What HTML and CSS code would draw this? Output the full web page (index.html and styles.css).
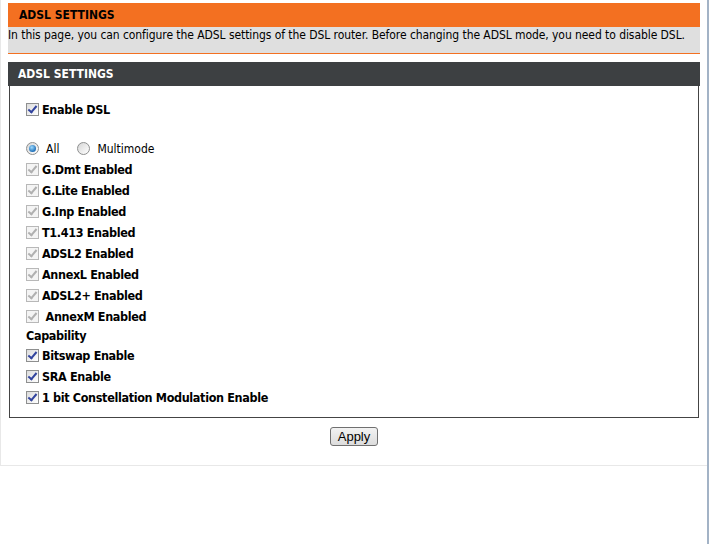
FILE: index.html
```html
<!DOCTYPE html>
<html lang="en">
<head>
    <meta charset="UTF-8">
    <title>ADSL Settings</title>
    <link rel="stylesheet" href="styles.css">
</head>
<body>

<div class="frame">
    <div class="page">
        <!-- Page title and help text -->
        <div class="title-bar">ADSL SETTINGS</div>
        <div class="help-text">In this page, you can configure the ADSL settings of the DSL router. Before changing the ADSL mode, you need to disable DSL.</div>

        <!-- Settings box -->
        <form id="adslForm">
            <div class="box-header">ADSL SETTINGS</div>
            <div class="box">
                <label class="row"><input type="checkbox" name="enableDsl" checked> Enable DSL</label>

                <div class="row radio-row">
                    <label><input type="radio" name="mode" value="all" checked> All</label>
                    <label><input type="radio" name="mode" value="multimode"> Multimode</label>
                </div>

                <label class="row"><input type="checkbox" checked disabled> G.Dmt Enabled</label>
                <label class="row"><input type="checkbox" checked disabled> G.Lite Enabled</label>
                <label class="row"><input type="checkbox" checked disabled> G.Inp Enabled</label>
                <label class="row"><input type="checkbox" checked disabled> T1.413 Enabled</label>
                <label class="row"><input type="checkbox" checked disabled> ADSL2 Enabled</label>
                <label class="row"><input type="checkbox" checked disabled> AnnexL Enabled</label>
                <label class="row"><input type="checkbox" checked disabled> ADSL2+ Enabled</label>
                <label class="row"><input type="checkbox" checked disabled> &nbsp;AnnexM Enabled</label>

                <div class="caption">Capability</div>
                <label class="row"><input type="checkbox" name="bitswap" checked> Bitswap Enable</label>
                <label class="row"><input type="checkbox" name="sra" checked> SRA Enable</label>
                <label class="row"><input type="checkbox" name="constellation" checked> 1 bit Constellation Modulation Enable</label>
            </div>

            <div class="actions">
                <button type="submit">Apply</button>
            </div>
        </form>
    </div>
    <div class="edge"></div>
</div>

</body>
</html>
```

FILE: styles.css
```css
/* Reset and general styling */
* {
    margin: 0;
    padding: 0;
    box-sizing: border-box;
}

body {
    font-family: "DejaVu Sans Condensed", "DejaVu Sans", sans-serif;
    font-size: 12px;
    color: #000;
    background-color: #fff;
}

/* Page plus the window edge on the right */
.frame {
    display: flex;
    height: 544px;
}

.page {
    width: 707px;
    height: 466px;
    padding: 3px 7px 0 7px;
    border-left: 1px solid #e8e8e8;
    border-bottom: 1px solid #e8e8e8;
}

.edge {
    width: 2px;
    background-color: #a3b3c6;
}

/* Orange title */
.title-bar {
    height: 24px;
    line-height: 25px;
    padding-left: 11px;
    background-color: #f37021;
    font-weight: bold;
}

.help-text {
    height: 27px;
    padding-top: 1px;
    line-height: 15px;
    background-color: #dfdfdf;
    border-bottom: 1px solid #f37021;
    white-space: nowrap;
    letter-spacing: -0.07px;
}

/* Dark box header */
.box-header {
    margin-top: 8px;
    height: 24px;
    line-height: 25px;
    padding-left: 10px;
    background-color: #3d4042;
    color: #fff;
    font-weight: bold;
}

.box {
    margin: 0 1px;
    padding: 13px 0 9px 16px;
    border: 1px solid #444;
    border-top: none;
}

.row {
    display: flex;
    align-items: center;
    height: 21px;
    font-weight: bold;
    font-size: 12.5px;
    letter-spacing: -0.35px;
    gap: 3px;
}

.radio-row {
    margin-top: 18px;
    font-weight: normal;
    font-size: 12px;
    letter-spacing: 0;
    gap: 18px;
}

.radio-row label {
    display: flex;
    align-items: center;
    gap: 7px;
}

.caption {
    height: 18px;
    line-height: 17px;
    font-weight: bold;
    font-size: 12.5px;
    letter-spacing: -0.35px;
}

/* Windows-style checkboxes */
input[type="checkbox"] {
    appearance: none;
    position: relative;
    width: 13px;
    height: 13px;
    border: 1px solid #8e8f8f;
    background: linear-gradient(135deg, #dcdcdc, #fff);
}

input[type="checkbox"]:checked::before {
    content: "";
    position: absolute;
    left: 3px;
    top: 0px;
    width: 3px;
    height: 7px;
    border: solid #32449e;
    border-width: 0 2px 2px 0;
    transform: rotate(40deg);
}

input[type="checkbox"]:disabled {
    border-color: #b8b8b8;
    background: #f4f4f4;
}

input[type="checkbox"]:disabled:checked::before {
    border-color: #b0b0b0;
}

input[type="radio"] {
    appearance: none;
    position: relative;
    width: 13px;
    height: 13px;
    border: 1px solid #8e8f8f;
    border-radius: 50%;
    background: linear-gradient(135deg, #d6d6d6, #fff);
}

input[type="radio"]:checked::before {
    content: "";
    position: absolute;
    left: 2px;
    top: 2px;
    width: 7px;
    height: 7px;
    border-radius: 50%;
    background: radial-gradient(circle at 40% 35%, #9fdcff, #1f6fb8 70%);
}

/* Apply button */
.actions {
    text-align: center;
    padding-top: 9px;
}

button {
    width: 48px;
    height: 19px;
    font-family: "Liberation Sans", Arial, sans-serif;
    font-size: 13px;
    color: #000;
    border: 1px solid #707070;
    border-radius: 3px;
    background: linear-gradient(#f2f2f2, #dcdcdc);
    cursor: pointer;
}
```
